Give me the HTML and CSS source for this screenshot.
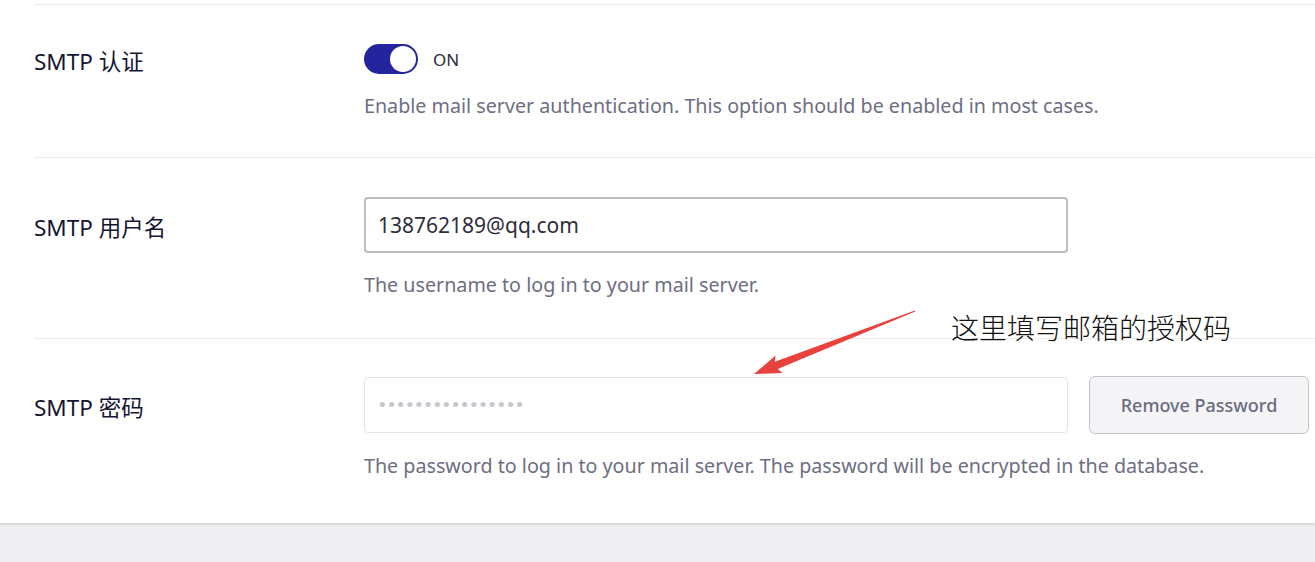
FILE: index.html
```html
<!DOCTYPE html>
<html lang="zh">
<head>
<meta charset="utf-8">
<title>SMTP</title>
<link rel="stylesheet" href="styles.css">
</head>
<body>
<div class="page">
  <section class="panel">
    <div class="row first">
      <div class="label">SMTP 认证</div>
      <div class="control">
        <span class="toggle"><span class="knob"></span></span>
        <span class="toggle-text">ON</span>
      </div>
      <p class="help">Enable mail server authentication. This option should be enabled in most cases.</p>
    </div>
    <div class="row second">
      <div class="label">SMTP 用户名</div>
      <div class="control">
        <div class="input filled">138762189@qq.com</div>
      </div>
      <p class="help">The username to log in to your mail server.</p>
    </div>
    <div class="row third">
      <div class="label">SMTP 密码</div>
      <div class="control">
        <div class="input pw">••••••••••••••••</div>
        <button class="btn">Remove Password</button>
      </div>
      <p class="help">The password to log in to your mail server. The password will be encrypted in the database.</p>
    </div>
  </section>
  <div class="note">这里填写邮箱的授权码</div>
  <svg class="arrow" width="190" height="90" viewBox="0 0 190 90">
    <g transform="translate(175 11) rotate(158.6)">
      <polygon points="0,-0.6 149,-4 146,-9.5 173,0 146,9.5 149,4 0,0.6" fill="#e8423f"/>
    </g>
  </svg>
</div>
</body>
</html>
```
FILE: styles.css
```css
* { box-sizing: border-box; }
html, body { margin: 0; padding: 0; }
body {
  background: #efeff2;
  font-family: "Noto Sans", "Noto Sans CJK SC", sans-serif;
  width: 1315px;
  height: 562px;
  overflow: hidden;
}
.page { position: relative; }
.panel {
  background: #ffffff;
  padding-top: 4px;
  box-shadow: 0 1px 3px rgba(0,0,0,0.18);
  height: 523px;
}
.row {
  margin-left: 34px;
  border-top: 1px solid #ebebef;
  display: grid;
  grid-template-columns: 330px 1fr;
}
.row.first { padding: 39px 0 36px 0; }
.row.second { padding: 39px 0 38px 0; }
.row.third { padding: 37px 0 0 0; }
.label {
  grid-column: 1;
  grid-row: 1;
  align-self: center;
  padding-top: 5px;
  font-size: 22.5px;
  line-height: 24px;
  color: #161632;
}
.control {
  grid-column: 2;
  grid-row: 1;
  display: flex;
  align-items: center;
  gap: 21px;
}
.help {
  grid-column: 2;
  grid-row: 2;
  margin: 17px 0 0 0;
  font-size: 19.7px;
  line-height: 30px;
  color: #6e6e82;
  white-space: nowrap;
}
.toggle {
  width: 54px;
  height: 30px;
  border-radius: 15px;
  background: #24249f;
  display: flex;
  align-items: center;
  justify-content: flex-end;
  padding-right: 2px;
}
.knob {
  width: 26px;
  height: 26px;
  border-radius: 50%;
  background: #ffffff;
}
.toggle-text {
  margin-left: -6px;
  font-size: 17px;
  color: #2a2a40;
}
.input {
  width: 704px;
  height: 56px;
  border-radius: 4px;
  display: flex;
  align-items: center;
  padding-left: 12px;
  font-size: 21px;
}
.input.filled {
  border: 2px solid #bdbdc2;
  color: #2e2e3c;
}
.input.pw {
  border: 1px solid #e4e4e8;
  color: #c6c6ce;
  font-family: "Liberation Sans", sans-serif;
  font-size: 19px;
  letter-spacing: 2.5px;
  padding-left: 14px;
}
.btn {
  width: 220px;
  height: 58px;
  border: 1px solid #c4c4ca;
  border-radius: 6px;
  background: #f4f4f7;
  font-family: "Noto Sans", sans-serif;
  font-size: 18px;
  font-weight: 500;
  color: #6a6a7e;
}
.note {
  position: absolute;
  left: 951px;
  top: 309px;
  font-family: "Noto Sans CJK SC", sans-serif;
  font-weight: 300;
  font-size: 28px;
  line-height: 36px;
  color: #111111;
}
.arrow {
  position: absolute;
  left: 740px;
  top: 300px;
}
```
